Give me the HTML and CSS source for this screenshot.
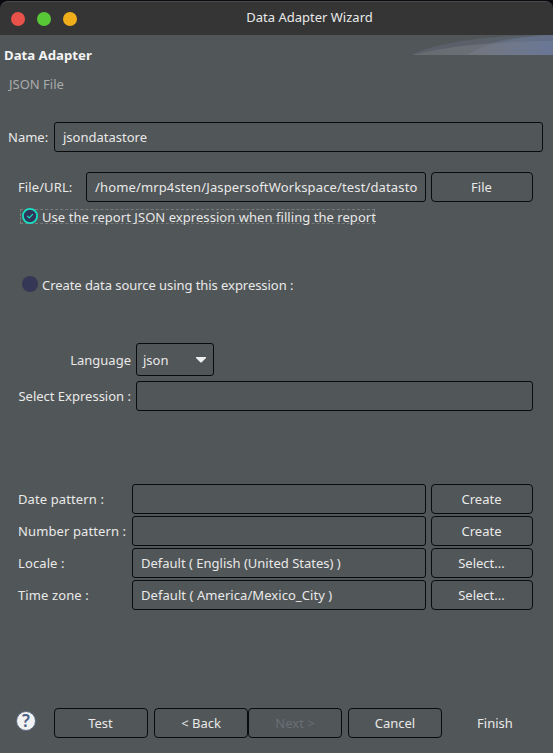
FILE: index.html
```html
<!DOCTYPE html>
<html lang="en">
<head>
<meta charset="utf-8">
<title>Data Adapter Wizard</title>
<link rel="stylesheet" href="styles.css">
</head>
<body>
<div class="window">
  <header class="titlebar">
    <span class="dots"><i class="dot red"></i><i class="dot green"></i><i class="dot amber"></i></span>
    <span class="title">Data Adapter Wizard</span>
  </header>
  <section class="heading">
    <div class="heading-text">
      <h1>Data Adapter</h1>
      <p>JSON File</p>
    </div>
    <svg class="swoosh" width="141" height="20" viewBox="0 0 141 20">
      <defs>
        <linearGradient id="g1" x1="0" x2="1"><stop offset="0" stop-color="#666b6f"/><stop offset=".55" stop-color="#6c7079"/><stop offset="1" stop-color="#66728e"/></linearGradient>
        <linearGradient id="g2" x1="0" x2="1"><stop offset="0" stop-color="#71757c"/><stop offset=".45" stop-color="#707889"/><stop offset="1" stop-color="#697696"/></linearGradient>
      </defs>
      <path d="M0 20C20 9 70 1 125 0H141V20Z" fill="#596069"/>
      <path d="M1 20C35 11 85 6 141 6V20Z" fill="url(#g1)"/>
      <path d="M56 20C68 10 98 2 141 0V20Z" fill="url(#g2)"/>
      <path d="M76 9C92 4 112 1 141 0V6C120 6 96 7 76 9Z" fill="#616b80" opacity=".65"/>
    </svg>
  </section>
  <main>
    <div class="row name-row"><label class="name-label">Name:</label><div class="field grow">jsondatastore</div></div>
    <div class="row inset file-row"><label class="file-label">File/URL:</label><div class="field grow path">/home/mrp4sten/JaspersoftWorkspace/test/datasto</div><div class="button side">File</div></div>
    <div class="radio focused">
      <svg width="16" height="16" viewBox="0 0 16 16"><circle cx="8" cy="8" r="7.1" fill="#30365a" stroke="#19e0c3" stroke-width="1.8"/><path d="M5.2 7.9L7.2 9.9L10.9 6.2" fill="none" stroke="#19e0c3" stroke-width="1.2"/></svg>
      <span>Use the report JSON expression when filling the report</span>
    </div>
    <div class="radio second">
      <svg width="16" height="16" viewBox="0 0 16 16"><circle cx="8" cy="8" r="8" fill="#343755"/></svg>
      <span>Create data source using this expression :</span>
    </div>
    <div class="row inset language-row"><label class="expr-label">Language</label><div class="field combo">json<svg width="10" height="6" viewBox="0 0 10 6"><path d="M0 0H10V1L5.5 5.5H4.5L0 1Z" fill="#eee"/></svg></div></div>
    <div class="row inset expression-row"><label class="expr-label">Select Expression :</label><div class="field grow"></div></div>
    <div class="formats">
      <div class="row inset"><label class="format-label">Date pattern :</label><div class="field grow"></div><div class="button side">Create</div></div>
      <div class="row inset"><label class="format-label">Number pattern :</label><div class="field grow"></div><div class="button side">Create</div></div>
      <div class="row inset"><label class="format-label">Locale :</label><div class="field grow">Default ( English (United States) )</div><div class="button side">Select...</div></div>
      <div class="row inset"><label class="format-label">Time zone :</label><div class="field grow zone">Default ( America/Mexico_City )</div><div class="button side">Select...</div></div>
    </div>
  </main>
  <footer>
    <div class="help">?</div>
    <div class="button test">Test</div>
    <div class="button back">&lt; Back</div>
    <div class="button disabled">Next &gt;</div>
    <div class="button cancel">Cancel</div>
    <div class="button flat">Finish</div>
  </footer>
</div>
</body>
</html>
```
FILE: styles.css
```css
* { box-sizing: border-box; }
body {
  margin: 0;
  background: #0b0a10;
  color: #e9e9e9;
  font: 13px/18px "Noto Sans", sans-serif;
}
.window {
  display: flex;
  flex-direction: column;
  height: 753px;
  padding-top: 1px;
  overflow: hidden;
}
.titlebar {
  display: grid;
  grid-template-columns: 78px 1fr;
  align-items: center;
  flex: none;
  height: 34px;
  border-top: 1px solid #4a4a4a;
  border-radius: 8px 8px 0 0;
  background: #353535;
}
.dots { display: flex; gap: 12px; padding: 1px 0 0 11px; }
.dot { flex: none; width: 14px; height: 14px; border-radius: 50%; }
.red { background: #e9524a; }
.green { background: #59c837; }
.amber { background: #f1ae1b; }
.title { padding-right: 12px; text-align: center; margin-top: -3px; }
.heading {
  display: flex;
  justify-content: space-between;
  flex: none;
  height: 87px;
  background: #515658;
}
.heading-text { padding: 11px 0 0 4px; }
h1 { margin: 0; font-size: 13.2px; line-height: 18px; color: #f4f4f4; }
p { margin: 11px 0 0 5px; color: #aaabac; }
.swoosh { display: block; flex: none; }
main, footer { background: #515658; }
main { flex: none; height: 586px; }
.row { display: flex; align-items: center; white-space: nowrap; }
.inset { padding: 0 20px 0 18px; }
.field, .button {
  height: 30px;
  border: 1px solid #090b0d;
  border-radius: 3px;
  line-height: 29px;
}
.field { padding: 0 8px; overflow: hidden; }
.button { flex: none; width: 94px; border-radius: 4px; text-align: center; }
.grow { flex: 1; min-width: 0; }
.side { width: 102px; margin-left: 5px; padding-right: 1px; }
.name-row { padding: 0 10px 0 8px; }
.name-label { width: 46px; }
.file-row { margin-top: 20px; }
.file-label { width: 68px; letter-spacing: 0.1px; }
.path { letter-spacing: 0.14px; }
.radio {
  display: flex;
  align-items: center;
  width: 355px;
  height: 15px;
  margin: 7px 0 0 20px;
  padding-left: 1px;
  border: 1px solid transparent;
  white-space: nowrap;
}
.focused { border: 1px dashed #777b7d; letter-spacing: 0.05px; }
.radio svg { flex: none; margin: -2px 4px 0 0; }
.radio span { margin-top: 1px; }
.second { margin-top: 54px; height: 14px; letter-spacing: -0.06px; }
.second span { margin-top: 0; }
.language-row { margin-top: 51px; }
.expr-label { width: 118px; padding-right: 5px; text-align: right; }
.combo {
  display: flex;
  align-items: center;
  justify-content: space-between;
  width: 78px;
  height: 33px;
  padding: 1px 7px 0 6px;
}
.expression-row { margin-top: 5px; }
.formats { display: grid; gap: 2px; margin-top: 73px; }
.format-label { width: 114px; letter-spacing: 0.11px; }
.zone { letter-spacing: 0.06px; }
footer {
  display: flex;
  flex: none;
  height: 45px;
  padding-left: 16px;
}
.help {
  width: 20px;
  height: 20px;
  margin: 3px 18px 0 0;
  border: 1px solid #5a6a84;
  border-radius: 50%;
  background: #f1f1f1;
  color: #4a6088;
  font: 600 17px/18px "Noto Sans", sans-serif;
  text-align: center;
}
.test { padding-right: 1px; }
.back { margin-left: 6px; }
.disabled { color: #6b6e77; }
.cancel { margin-left: 6px; }
.flat { margin-left: 6px; border-color: transparent; }
```
